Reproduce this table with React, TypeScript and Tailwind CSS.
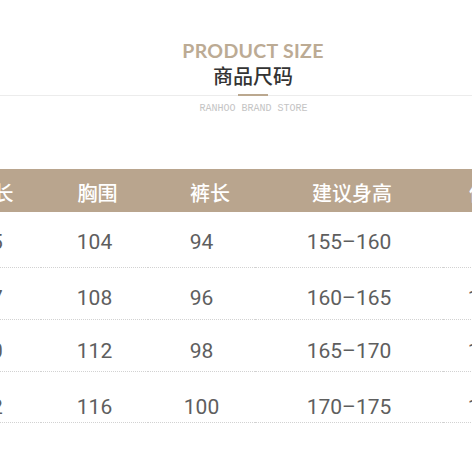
import React from "react";

const cols = [
  { w: "w-[100px]", head: "衣长", hp: "pl-[5px]", vals: ["65", "67", "70", "72"] },
  { w: "w-[107px]", head: "胸围", hp: "pl-[6px]", vals: ["104", "108", "112", "116"] },
  { w: "w-[107px]", head: "裤长", hp: "pl-[17px]", vals: ["94", "96", "98", "100"] },
  { w: "w-[188px]", head: "建议身高", hp: "pl-[6px]", vals: ["155–160", "160–165", "165–170", "170–175"] },
  { w: "w-[134px]", head: "体重", hp: "pr-[42px]", vals: ["90–100", "100–110", "110–120", "120–130"] },
];

const rows = [
  "h-[56px] pt-[20px]",
  "h-[52px] pt-[20px]",
  "h-[52px] pt-[20.5px]",
  "h-[51px] pt-[25px]",
];

export default function App() {
  return (
    <div className="w-[472px] h-[472px] bg-white overflow-hidden">
      <div className="flex flex-col items-center pt-[41px]">
        <div className="w-full flex flex-col items-center pl-[34px]">
          <div
            className="text-[19.5px] leading-none font-bold text-[#bcab94] tracking-[0.3px]"
            style={{ fontFamily: "Lato, 'Open Sans', sans-serif" }}
          >
            PRODUCT SIZE
          </div>
          <div
            className="mt-[5px] text-[20px] leading-[20px] font-medium text-[#333333]"
            style={{ fontFamily: "'Noto Sans CJK SC', sans-serif" }}
          >
            商品尺码
          </div>
        </div>
        <div className="mt-[8.5px] w-full h-[2px] flex items-start">
          <div className="flex-1 h-px mt-px bg-[#ececec]" />
          <div className="w-[30px] h-[2px] bg-[#bba88f]" />
          <div className="w-[204px] h-px mt-px bg-[#ececec]" />
        </div>
        <div className="w-full flex justify-center pl-[35px]">
          <div
            className="mt-[8px] text-[10px] leading-[10px] text-[#c4c4c4]"
            style={{ fontFamily: "'Liberation Mono', monospace" }}
          >
            RANHOO BRAND STORE
          </div>
        </div>
      </div>

      <div className="mt-[55px] w-[472px] overflow-hidden">
        <div className="flex ml-[-59px] w-max">
          {cols.map((c, ci) => (
            <div key={ci} className={`${c.w} flex flex-col`}>
              <div
                className={`h-[43px] bg-[#b9a58e] pt-[14px] text-center text-white text-[20px] leading-[20px] font-medium ${c.hp}`}
                style={{ fontFamily: "'Noto Sans CJK SC', sans-serif" }}
              >
                {c.head}
              </div>
              {c.vals.map((v, ri) => (
                <div
                  key={ri}
                  className={`${rows[ri]} border-b border-dotted border-[#d2d2d2] text-center text-[21px] leading-[21px] font-normal text-[#5e5e5e]`}
                  style={{ fontFamily: "Roboto, 'Liberation Sans', Arial, sans-serif" }}
                >
                  {v}
                </div>
              ))}
            </div>
          ))}
        </div>
      </div>
    </div>
  );
}
